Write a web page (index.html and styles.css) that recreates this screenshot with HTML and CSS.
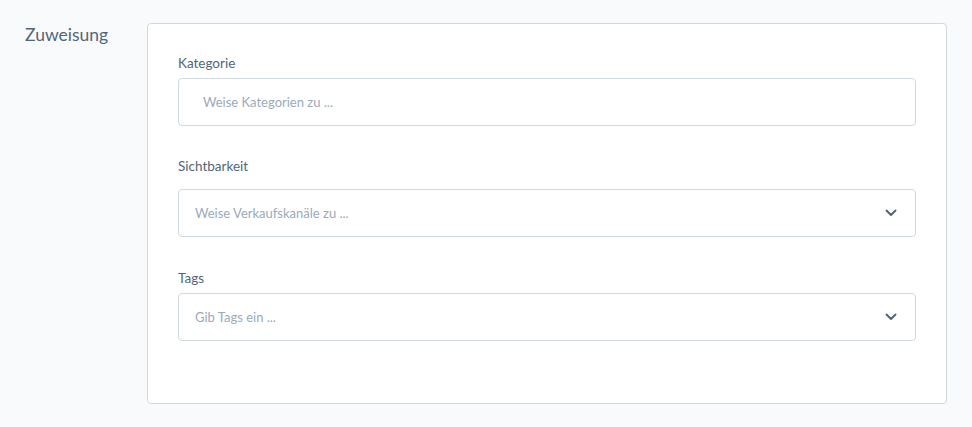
FILE: index.html
```html
<!DOCTYPE html>
<html lang="de">
<head>
  <meta charset="UTF-8">
  <title>Zuweisung</title>
  <link rel="stylesheet" href="styles.css">
</head>
<body>
  <section class="card-section">
    <h2 class="section-title">Zuweisung</h2>

    <div class="card">
      <div class="field field-category">
        <label class="field-label">Kategorie</label>
        <div class="field-input field-input-wide">
          <span class="placeholder">Weise Kategorien zu ...</span>
        </div>
      </div>

      <div class="field field-visibility">
        <label class="field-label">Sichtbarkeit</label>
        <div class="field-input">
          <span class="placeholder">Weise Verkaufskanäle zu ...</span>
          <svg class="chevron" width="12" height="8" viewBox="0 0 12 8">
            <path d="M1.5 1.5 L6 6 L10.5 1.5" fill="none" stroke="#52667a" stroke-width="2" stroke-linecap="round" stroke-linejoin="round"/>
          </svg>
        </div>
      </div>

      <div class="field field-tags">
        <label class="field-label">Tags</label>
        <div class="field-input">
          <span class="placeholder">Gib Tags ein ...</span>
          <svg class="chevron" width="12" height="8" viewBox="0 0 12 8">
            <path d="M1.5 1.5 L6 6 L10.5 1.5" fill="none" stroke="#52667a" stroke-width="2" stroke-linecap="round" stroke-linejoin="round"/>
          </svg>
        </div>
      </div>
    </div>
  </section>
</body>
</html>
```

FILE: styles.css
```css
/* Reset */
* {
  margin: 0;
  padding: 0;
  box-sizing: border-box;
}

body {
  background: #f9fafb;
  font-family: "Lato", "Noto Sans", sans-serif;
  color: #52667a;
}

/* Section with title on the left and card on the right */
.card-section {
  display: flex;
  padding: 23px 25px 0 25px;
}

.section-title {
  width: 122px;
  flex-shrink: 0;
  font-size: 17.5px;
  font-weight: normal;
  line-height: 22px;
  padding-top: 1px;
  color: #52667a;
}

.card {
  flex: 1;
  background: #fff;
  border: 1px solid #d1d9e0;
  border-radius: 4px;
  padding: 29px 30px 62px;
}

/* Form fields */
.field-label {
  display: block;
  font-size: 13.5px;
  line-height: 20px;
  margin-bottom: 5px;
}

.field-visibility {
  margin-top: 30px;
}

.field-visibility .field-label {
  margin-bottom: 13px;
}

.field-tags {
  margin-top: 31px;
}

.field-input {
  display: flex;
  align-items: center;
  justify-content: space-between;
  height: 48px;
  padding: 0 18px 0 16px;
  border: 1px solid #d1d9e0;
  border-radius: 4px;
  background: #fff;
}

.field-input-wide {
  padding-left: 24px;
}

.placeholder {
  font-size: 13px;
  color: #9aaabb;
}

.chevron {
  display: block;
}
```
